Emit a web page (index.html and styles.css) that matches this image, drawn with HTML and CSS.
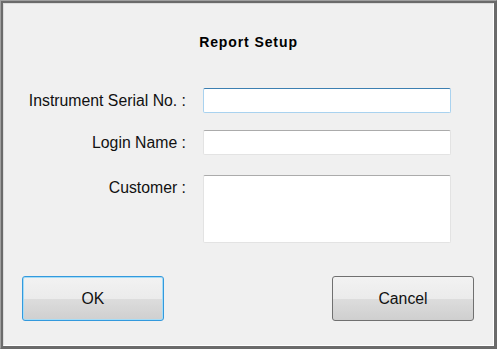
FILE: index.html
```html
<!DOCTYPE html>
<html lang="en">
<head>
  <meta charset="UTF-8" />
  <title>Report Setup</title>
  <link rel="stylesheet" href="styles.css">
</head>
<body>
  <div class="window">
    <div class="frame">
      <div class="dialog">
        <h1 class="title">Report Setup</h1>
        <div class="form">
          <label for="serial">Instrument Serial No. :</label>
          <input id="serial" class="field focused">
          <label for="login">Login Name :</label>
          <input id="login" class="field">
          <label for="customer" class="top">Customer :</label>
          <textarea id="customer" class="field area"></textarea>
        </div>
        <div class="buttons">
          <button class="btn default">OK</button>
          <button class="btn">Cancel</button>
        </div>
      </div>
    </div>
  </div>
</body>
</html>
```

FILE: styles.css
```css
* { margin:0; padding:0; box-sizing:border-box; }
html, body { width:497px; height:349px; background:#f0f0f0; font-family:"Liberation Sans", Arial, sans-serif; color:#000; overflow:hidden; }

/* window chrome */
.window { width:497px; height:349px; border-top:1px solid #a0a0a0; border-left:1px solid #a0a0a0; border-right:1px solid #696969; border-bottom:1px solid #696969; }
.frame { height:100%; border:2px solid #6b6b6b; }
.dialog { height:100%; display:flex; flex-direction:column; border-top:1px solid #dcdcdc; border-left:1px solid #dcdcdc; border-right:1px solid #fff; border-bottom:1px solid #fff; background:#f0f0f0; }

.title { margin-top:30px; text-align:center; font-size:14px; line-height:16px; font-weight:bold; letter-spacing:0.9px; }

.form { margin-top:38px; display:grid; grid-template-columns:1fr 248px; column-gap:17px; row-gap:17px; padding-right:42px; }
.form label { text-align:right; font-size:15.8px; line-height:25px; color:#111; }
.field { height:25px; background:#fff; border:1px solid #e3e3e3; border-top-color:#ababab; border-radius:2px; font:inherit; outline:none; }
.field.focused { border-color:#a9d2ef; border-top-color:#3c7fb1; }
.field.area { height:68px; margin-top:3px; resize:none; }
.form label.top { margin-top:3px; }

.buttons { margin-top:33px; display:flex; justify-content:space-between; padding:0 19px 0 18px; }
.btn { width:142px; height:45px; border:1px solid #707070; border-radius:3px; font-family:inherit; font-size:15.8px; color:#111;
  background:linear-gradient(#f2f2f2 0%, #ebebeb 50%, #dddddd 50%, #cfcfcf 100%); }
.btn.default { border-color:#3399dd; box-shadow:inset 0 0 0 1px #a5dcf6; }
```
